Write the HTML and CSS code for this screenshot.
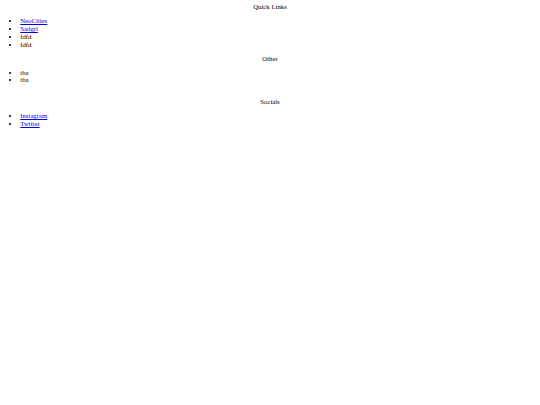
FILE: index.html
```html
<!DOCTYPE html>
<html>
<head>
<meta charset="utf-8">
<link rel="stylesheet" href="styles.css">
</head>
<body>
<div class="title">Quick Links</div>
<ul class="list">
<li><a href="#">NeoCities</a></li>
<li><a href="#">Sadgrl</a></li>
<li>fdfd</li>
<li>fdfd</li>
</ul>
<div class="title">Other</div>
<ul class="list">
<li>tba</li>
<li>tba</li>
</ul>
<br>
<div class="title">Socials</div>
<ul class="list">
<li><a href="#">Instagram</a></li>
<li><a href="#">Twitter</a></li>
</ul>
</body>
</html>
```

FILE: styles.css
```css
html {
  font-size: 6.75px;
}
body {
  margin: 0.5rem;
  font-family: "Liberation Serif", "Times New Roman", serif;
  font-size: 1rem;
  line-height: 7.7px;
  color: #000;
  background: #fff;
}
.title {
  text-align: center;
}
.list {
  margin: 6.4px 0;
  padding-left: 2.5em;
}
a {
  color: #0000ee;
}
```
